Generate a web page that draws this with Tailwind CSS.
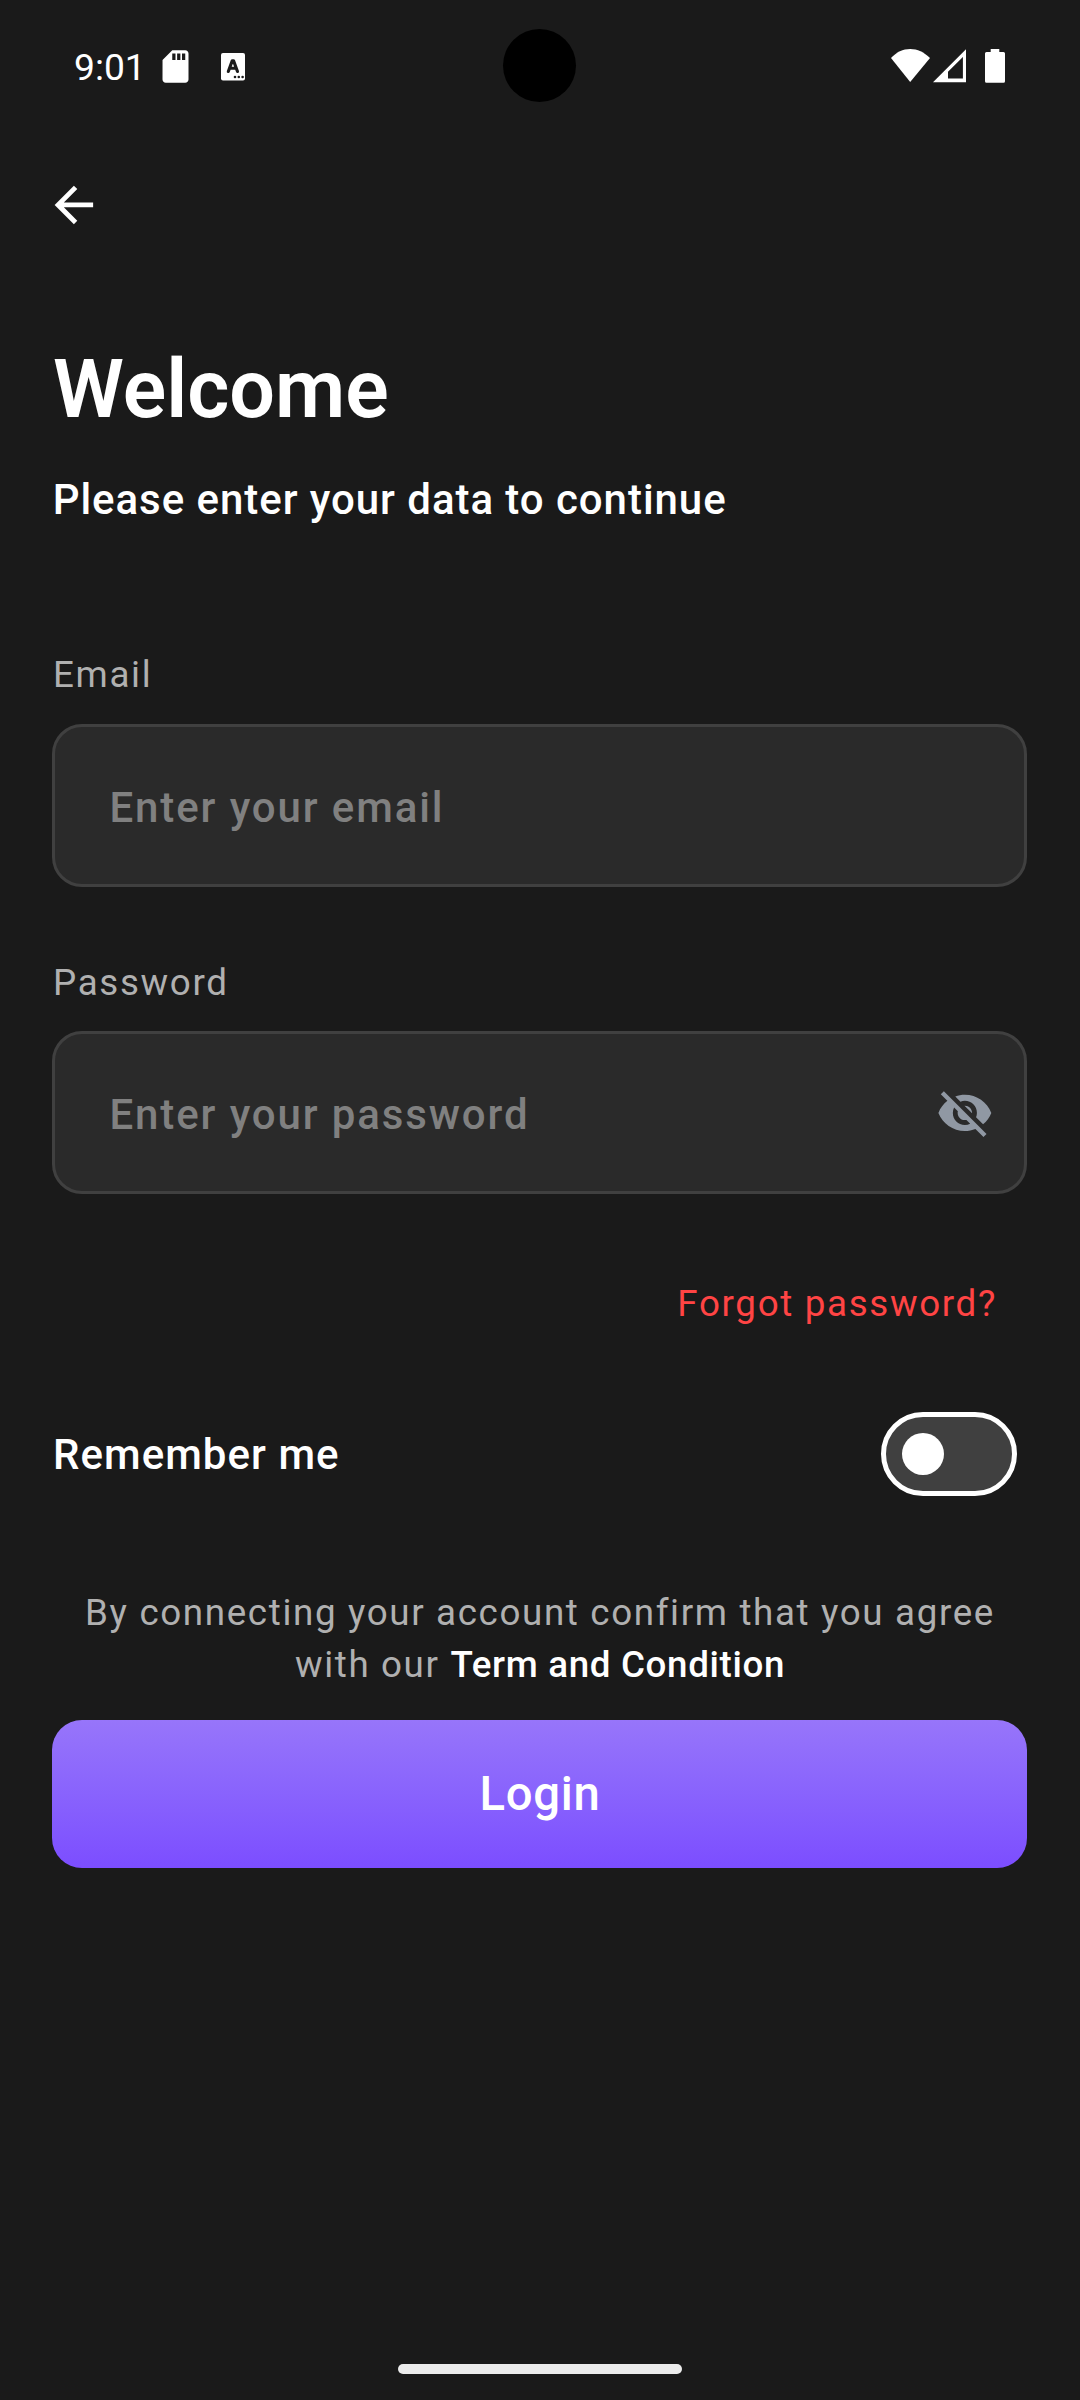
<!DOCTYPE html>
<html lang="en">
<head>
<meta charset="utf-8">
<title>Login</title>
<script src="https://cdn.jsdelivr.net/npm/@tailwindcss/browser@4"></script>
</head>
<body class="bg-[#1a1a1a] font-[Roboto,sans-serif] text-white">
<div class="relative flex h-[2400px] w-[1080px] flex-col overflow-hidden bg-[#1a1a1a]">

  <!-- Status bar -->
  <header class="flex h-[128px] shrink-0 items-start justify-between pr-[74px] pl-[74px]">
    <div class="flex items-start pt-[47px]">
      <span class="w-[81.500px] pt-px text-[37.200px] leading-[38px]">9:01</span>
      <svg class="size-[39px]" viewBox="0 0 24 24" fill="#fff"><path d="M18 2h-8L4.020 8 4 20c0 1.100.9 2 2 2h12c1.100 0 2-.9 2-2V4c0-1.100-.9-2-2-2zm-6 6h-2V4h2v4zm3 0h-2V4h2v4zm3 0h-2V4h2v4z"/></svg>
      <svg class="mt-[6px] ml-[26.500px] h-[28px] w-[24px]" viewBox="0 0 24 28">
        <rect width="24" height="27.500" rx="2" fill="#fff"/>
        <path d="M7.300 18.500 11.200 7.900h1.400L16.500 18.500M8.800 15.300h6.200" fill="none" stroke="#1a1a1a" stroke-width="3.100" stroke-linecap="round" stroke-linejoin="round"/>
        <g fill="#1a1a1a"><circle cx="14" cy="24" r="1.300"/><circle cx="17.800" cy="24" r="1.300"/><circle cx="21.600" cy="24" r="1.300"/></g>
      </svg>
    </div>
    <div class="flex pt-[49px]">
      <svg class="h-[34px] w-[40px]" viewBox="0 0 40 34" fill="#fff"><path d="M20.200 33 1 9C6.300 3.200 13 0 20.200 0S34.100 3.200 40 9z"/></svg>
      <svg class="ml-[3px] h-[34px] w-[34px]" viewBox="0 0 34 34" fill="#fff"><path fill-rule="evenodd" d="M0 33.200 33 .2v33zM15 22.700v6.800h14.900V8z"/></svg>
      <svg class="ml-[17px] h-[34px] w-[22px]" viewBox="0 0 22 34" fill="#fff"><path d="M6.700 0h8.600v3H19.500a1.500 1.500 0 0 1 1.500 1.500v27.800a1.500 1.500 0 0 1-1.500 1.500h-17A1.500 1.500 0 0 1 1 32.300V4.500A1.500 1.500 0 0 1 2.500 3H6.700z"/></svg>
    </div>
  </header>
  <!-- Camera cutout -->
  <div class="absolute top-[29px] left-[503px] size-[73px] rounded-full bg-black"></div>

  <main class="flex flex-col pr-[53px] pl-[52px]">
    <button class="mt-[48px] -ml-[7.400px] size-[58px]" aria-label="Back">
      <svg class="size-[57.750px]" viewBox="0 0 24 24" fill="#fff"><path d="M20 11H7.830l5.590-5.590L12 4l-8 8 8 8 1.410-1.410L7.830 13H20v-2z"/></svg>
    </button>

    <h1 class="mt-[108px] pl-px text-[80.800px] leading-[96px] font-semibold">Welcome</h1>
    <p class="mt-[34px] pl-[0.700px] text-[42px] leading-[56px] font-medium tracking-[0.945px]">Please enter your data to continue</p>

    <label class="mt-[121px] pl-px text-[36.750px] leading-[52px] tracking-[1.660px] text-[#b0b0b0]">Email</label>
    <div class="mt-[23px] flex h-[163px] items-center rounded-[30px] border-[3px] border-[#404040] bg-[#2a2a2a] pt-[4px] pl-[54.500px] text-[42px] font-medium tracking-[1.880px] text-[#808080]">Enter your email</div>

    <label class="mt-[70px] pl-px text-[36.750px] leading-[52px] tracking-[1.660px] text-[#b0b0b0]">Password</label>
    <div class="mt-[22px] flex h-[163px] items-center justify-between rounded-[30px] border-[3px] border-[#404040] bg-[#2a2a2a] pr-[30.500px] pl-[54.500px]">
      <span class="pt-[4px] text-[42px] font-medium tracking-[1.880px] text-[#808080]">Enter your password</span>
      <svg class="mt-px size-[57.750px]" viewBox="0 0 24 24" fill="#9098a3"><path d="M12 7c2.760 0 5 2.240 5 5 0 .65-.13 1.260-.36 1.830l2.920 2.920c1.510-1.260 2.700-2.890 3.430-4.750-1.730-4.390-6-7.500-11-7.500-1.400 0-2.740.25-3.980.7l2.160 2.160C10.740 7.130 11.350 7 12 7zM2 4.270l2.280 2.280.46.46C3.080 8.300 1.780 10.020 1 12c1.730 4.390 6 7.500 11 7.500 1.550 0 3.030-.3 4.380-.84l.42.42L19.730 22 21 20.730 3.270 3 2 4.270zM7.530 9.800l1.550 1.550c-.05.21-.08.43-.08.65 0 1.660 1.340 3 3 3 .22 0 .44-.03.65-.08l1.550 1.550c-.67.33-1.410.53-2.200.53-2.760 0-5-2.240-5-5 0-.79.2-1.530.53-2.200zm4.310-.78l3.150 3.150.02-.16c0-1.660-1.340-3-3-3l-.17.01z"/></svg>
    </div>

    <a class="mt-[84px] self-end pr-[30px] text-[36.750px] leading-[52px] tracking-[1.660px] text-[#ff4444]">Forgot password?</a>

    <div class="mt-[82px] flex h-[84px] items-center justify-between pr-[10px]">
      <span class="pt-[2px] pl-px text-[42px] leading-[56px] font-medium tracking-[1.050px]">Remember me</span>
      <div class="flex h-[84px] w-[136px] items-center rounded-full border-[5px] border-white bg-[#404040] pl-[16px]">
        <div class="size-[41.500px] rounded-full bg-white"></div>
      </div>
    </div>

    <p class="mt-[91px] pl-px text-center text-[36.750px] leading-[52px] tracking-[1.640px] whitespace-nowrap text-[#b0b0b0]">By connecting your account confirm that you agree<br>with our <span class="font-medium tracking-[0.656px] text-white">Term and Condition</span></p>

    <button class="mt-[29px] h-[148px] rounded-[30px] bg-linear-to-b from-[#9775fa] to-[#7c4dff] pl-px text-[47.250px] font-medium tracking-[0.700px]">Login</button>
  </main>

  <!-- Gesture handle -->
  <div class="mt-auto mb-[26px] h-[10px] w-[284px] self-center rounded-full bg-[#ececec]"></div>
</div>
</body>
</html>
